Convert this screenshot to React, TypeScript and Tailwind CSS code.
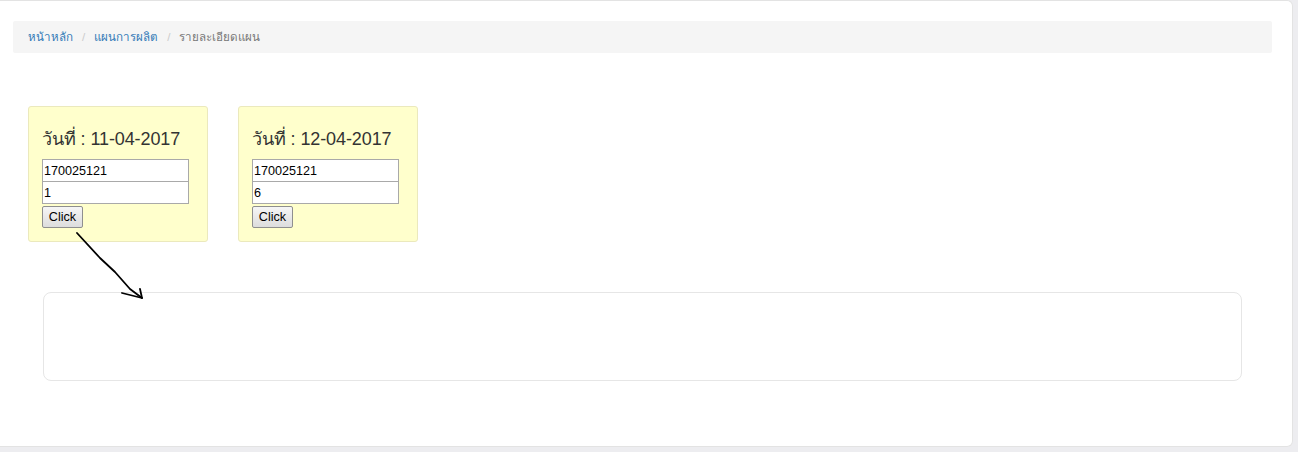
import React from "react";

function DayCard({ date, qty }: { date: string; qty: string }) {
  return (
    <div className="w-[180px] h-[136px] bg-[#ffffcc] border border-[#ebe9bd] rounded-[3px] pl-[13px] pt-[19px]">
      <div className="text-[18px] leading-[26px] text-[#333] tracking-[-0.1px] font-['Liberation_Sans','Noto_Sans',sans-serif]">
        วันที่ : {date}
      </div>
      <div className="mt-[7px] flex flex-col">
        <input
          readOnly
          value="170025121"
          className="w-[147px] h-[23px] border border-[#a9a9a9] bg-white px-[1px] text-[12.6px] text-black font-['Liberation_Sans',sans-serif] outline-none"
        />
        <input
          readOnly
          value={qty}
          className="w-[147px] h-[23px] border border-[#a9a9a9] bg-white px-[1px] text-[12.6px] text-black font-['Liberation_Sans',sans-serif] outline-none -mt-[1px]"
        />
        <button className="mt-[2px] w-[41px] h-[22px] border border-[#8f8f8f] rounded-[2px] bg-gradient-to-b from-[#f6f6f6] to-[#dddddd] text-[12.6px] text-black font-['Liberation_Sans',sans-serif]">
          Click
        </button>
      </div>
    </div>
  );
}

export default function App() {
  return (
    <div className="w-[1298px] h-[452px] bg-[#ededf0] font-['Liberation_Sans','Noto_Sans',sans-serif]">
      <div className="relative w-[1293px] h-[447px] bg-white border border-[#e3e3e3] rounded-r-[6px] border-l-0 pt-[20px]">
        <div className="ml-[13px] w-[1259px] h-[32px] bg-[#f5f5f5] rounded-[2px] flex items-center px-[15px] text-[11.6px]">
          <span className="text-[#337ab7]">หน้าหลัก</span>
          <span className="text-[#cccccc] px-[9px]">/</span>
          <span className="text-[#337ab7]">แผนการผลิต</span>
          <span className="text-[#cccccc] px-[9px]">/</span>
          <span className="text-[#777777]">รายละเอียดแผน</span>
        </div>
        <div className="flex gap-[30px] ml-[28px] mt-[53px]">
          <DayCard date="11-04-2017" qty="1" />
          <DayCard date="12-04-2017" qty="6" />
        </div>
        <div className="ml-[43px] mt-[50px] w-[1199px] h-[89px] border border-[#e6e6e6] rounded-[8px]" />
        <svg
          className="absolute left-0 top-0 pointer-events-none"
          width="200"
          height="320"
          viewBox="0 0 200 320"
        >
          <path
            d="M77 232 L100 257 L115 271 L130 288 L142 297"
            fill="none"
            stroke="#000"
            strokeWidth="1.8"
            strokeLinecap="round"
            strokeLinejoin="round"
          />
          <path
            d="M122 292 L142 297 M140 288 L142 297"
            fill="none"
            stroke="#000"
            strokeWidth="1.8"
            strokeLinecap="round"
          />
        </svg>
      </div>
    </div>
  );
}
